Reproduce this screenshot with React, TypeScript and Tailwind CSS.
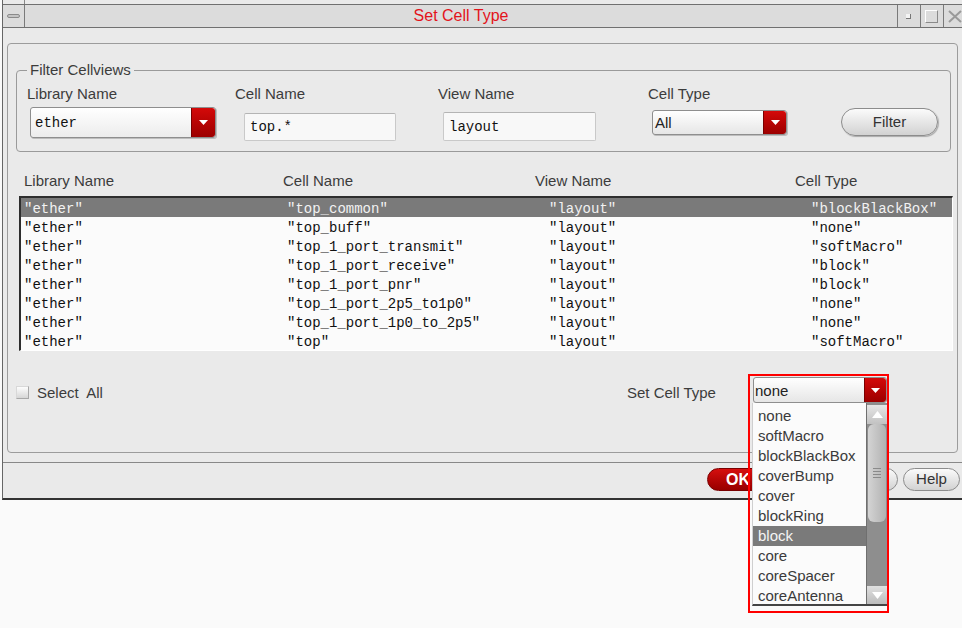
const sans = "font-['Liberation_Sans',Arial,sans-serif]";
const mono = "font-['Liberation_Mono','Courier_New',monospace]";

const rows = [
  ["ether", "top_common", "layout", "blockBlackBox"],
  ["ether", "top_buff", "layout", "none"],
  ["ether", "top_1_port_transmit", "layout", "softMacro"],
  ["ether", "top_1_port_receive", "layout", "block"],
  ["ether", "top_1_port_pnr", "layout", "block"],
  ["ether", "top_1_port_2p5_to1p0", "layout", "none"],
  ["ether", "top_1_port_1p0_to_2p5", "layout", "none"],
  ["ether", "top", "layout", "softMacro"],
];

const cellTypes = [
  "none",
  "softMacro",
  "blockBlackBox",
  "coverBump",
  "cover",
  "blockRing",
  "block",
  "core",
  "coreSpacer",
  "coreAntenna",
];

function Arrow() {
  return (
    <svg width="9" height="5" viewBox="0 0 9 5">
      <path d="M0 0 H9 L4.5 5 Z" fill="#ffffff" />
    </svg>
  );
}

function RedBox({ w }: { w: string }) {
  return (
    <div
      className={`${w} h-full flex items-center justify-center rounded-r-[3px] bg-gradient-to-b from-[#d40a0a] to-[#9c0000] border-l border-[#7a0000]`}
    >
      <Arrow />
    </div>
  );
}

function Pill({ label, className }: { label?: string; className: string }) {
  return (
    <div
      className={`h-[23px] rounded-full border border-[#8c8c8c] bg-gradient-to-b from-[#fbfbfb] to-[#d2d2d2] flex items-center justify-center text-[15px] text-[#333] ${className}`}
    >
      {label}
    </div>
  );
}

export default function App() {
  return (
    <div className={`w-[962px] h-[628px] bg-[#fafafa] overflow-hidden ${sans}`}>
      <div className="ml-[2px] h-[500px] bg-[#eaeaea] border-l border-[#666] border-b-2 border-b-[#333] flex flex-col">
        {/* frame strip */}
        <div className="h-[4px] flex">
          <div className="w-[22px] border-r border-[#888]" />
        </div>

        {/* title bar */}
        <div className="h-[24px] flex bg-[#dcdcdc] border-y border-[#707070]">
          <div className="w-[22px] border-r border-[#7a7a7a] flex items-center justify-center">
            <div className="w-[13px] h-[4px] rounded-[2px] bg-[#c4c4c4] border border-[#8a8a8a]" />
          </div>
          <div className="flex-1 flex items-center justify-center text-[16px] text-[#e3131b]">
            Set Cell Type
          </div>
          <div className="w-[65px] flex">
            <div className="w-[23px] border-l border-[#7a7a7a] flex items-center justify-center">
              <div className="w-[5px] h-[5px] bg-[#f4f4f4] border-r border-b border-[#777]" />
            </div>
            <div className="w-[24px] border-l border-[#7a7a7a] flex items-center justify-center">
              <div className="w-[13px] h-[13px] border border-t-white border-l-white border-r-[#8a8a8a] border-b-[#8a8a8a]" />
            </div>
            <div className="flex-1 border-l border-[#7a7a7a] flex items-center pl-[4px]">
              <svg width="14" height="13" viewBox="0 0 14 13">
                <path d="M1 1 L13 12 M13 1 L1 12" stroke="#9a9a9a" strokeWidth="2" />
              </svg>
            </div>
          </div>
        </div>

        {/* main panel */}
        <div className="mt-[15px] ml-[4px] w-[951px] h-[410px] border border-[#9c9c9c] rounded-[4px] pl-[8px] pt-[17px]">
          <fieldset className="w-[935px] border border-[#9a9a9a] rounded-[4px] px-[10px] pb-[10px]">
            <legend className="px-[3px] text-[15px] leading-[18px] text-[#3c3c3c]">Filter Cellviews</legend>
            <div className="flex items-start pt-[6px] text-[15px] leading-[18px] text-[#3c3c3c]">
              <div className="w-[208px] flex flex-col">
                <span>Library Name</span>
                <div className="mt-[4px] ml-[3px] w-[186px] h-[31px] flex rounded-[3px] border border-[#8e8e8e] bg-gradient-to-b from-[#ffffff] to-[#ececec] shadow-[1px_1px_0_#bdbdbd]">
                  <div className={`flex-1 flex items-center pl-[4px] text-[14px] text-[#111] ${mono}`}>ether</div>
                  <RedBox w="w-[24px]" />
                </div>
              </div>
              <div className="w-[203px] flex flex-col">
                <span>Cell Name</span>
                <div className={`mt-[10px] ml-[9px] w-[152px] h-[28px] flex items-center pl-[5px] rounded-[2px] border border-[#c9c9c9] border-t-[#b4b4b4] bg-[#f8f8f8] text-[14px] text-[#111] ${mono}`}>
                  top.*
                </div>
              </div>
              <div className="w-[210px] flex flex-col">
                <span>View Name</span>
                <div className={`mt-[9px] ml-[5px] w-[153px] h-[29px] flex items-center pl-[5px] rounded-[2px] border border-[#c9c9c9] border-t-[#b4b4b4] bg-[#f8f8f8] text-[14px] text-[#111] ${mono}`}>
                  layout
                </div>
              </div>
              <div className="w-[193px] flex flex-col">
                <span>Cell Type</span>
                <div className="mt-[7px] ml-[4px] w-[135px] h-[25px] flex rounded-[3px] border border-[#8e8e8e] bg-gradient-to-b from-[#ffffff] to-[#e6e6e6] shadow-[1px_1px_0_#bdbdbd]">
                  <div className="flex-1 flex items-center pl-[2px] text-[15px] text-[#222]">All</div>
                  <RedBox w="w-[23px]" />
                </div>
              </div>
              <Pill label="Filter" className="mt-[23px] w-[97px] h-[28px] shadow-[1px_1px_1px_#aaa]" />
            </div>
          </fieldset>

          {/* table header */}
          <div className="mt-[20px] pl-[8px] flex text-[15px] leading-[18px] text-[#3c3c3c]">
            <div className="w-[259px]">Library Name</div>
            <div className="w-[252px]">Cell Name</div>
            <div className="w-[260px]">View Name</div>
            <div>Cell Type</div>
          </div>

          {/* table */}
          <div className={`mt-[6px] ml-[3px] w-[934px] h-[155px] bg-[#fbfbfb] border-t-2 border-l-2 border-[#2e2e2e] border-r border-r-[#ffffff] border-b border-b-[#ffffff] text-[14px] ${mono}`}>
            {rows.map((r, i) => (
              <div
                key={i}
                className={`h-[19px] flex items-center pt-[4px] pl-[3px] ${i === 0 ? "bg-[#7a7a7a] text-[#f2f2f2]" : "text-[#111]"}`}
              >
                <div className="w-[263px]">"{r[0]}"</div>
                <div className="w-[262px]">"{r[1]}"</div>
                <div className="w-[262px]">"{r[2]}"</div>
                <div>"{r[3]}"</div>
              </div>
            ))}
          </div>

          {/* set cell type row */}
          <div className="mt-[26px] h-[26px] flex items-start text-[15px] leading-[18px] text-[#3c3c3c]">
            <div className="w-[611px] flex items-start">
              <div className="mt-[9px] w-[13px] h-[13px] border border-[#a8a8a8] border-t-[#d8d8d8] border-l-[#d8d8d8] bg-gradient-to-b from-[#fdfdfd] to-[#d6d6d6]" />
              <span className="mt-[7px] ml-[8px] whitespace-pre">Select  All</span>
            </div>
            <div className="w-[126px] mt-[7px]">Set Cell Type</div>
            <div className="relative">
              <div className="w-[134px] h-[26px] flex rounded-[3px] border border-[#8e8e8e] bg-gradient-to-b from-[#ffffff] to-[#e6e6e6]">
                <div className="flex-1 flex items-center pt-[2px] pl-[1px] text-[15px] text-[#222]">none</div>
                <RedBox w="w-[22px]" />
              </div>

              {/* open dropdown list */}
              <div className="absolute left-[-1px] top-[26px] z-10 w-[135px] h-[203px] flex bg-[#fbfbfb] border-l border-[#cfcfcf] border-b-2 border-b-[#444]">
                <div className="flex-1 pt-[3px]">
                  {cellTypes.map((t) => (
                    <div
                      key={t}
                      className={`h-[20px] flex items-center pl-[5px] text-[15px] ${t === "block" ? "bg-[#7a7a7a] text-[#f4f4f4]" : "text-[#3a3a3a]"}`}
                    >
                      {t}
                    </div>
                  ))}
                </div>
                <div className="w-[21px] flex flex-col bg-[#8e8e8e] border-l border-[#6f6f6f]">
                  <div className="h-[19px] mt-[2px] flex items-center justify-center bg-gradient-to-b from-[#e6e6e6] to-[#c2c2c2]">
                    <svg width="11" height="7" viewBox="0 0 11 7">
                      <path d="M0 7 L5.5 0 L11 7 Z" fill="#ffffff" />
                    </svg>
                  </div>
                  <div className="h-[98px] mx-[1px] rounded-[6px] bg-gradient-to-r from-[#d4d4d4] to-[#b2b2b2] flex items-center justify-center">
                    <div className="flex flex-col gap-[2px]">
                      <div className="w-[8px] h-[1px] bg-[#8a8a8a]" />
                      <div className="w-[8px] h-[1px] bg-[#8a8a8a]" />
                      <div className="w-[8px] h-[1px] bg-[#8a8a8a]" />
                      <div className="w-[8px] h-[1px] bg-[#8a8a8a]" />
                    </div>
                  </div>
                  <div className="flex-1" />
                  <div className="h-[18px] flex items-center justify-center bg-gradient-to-b from-[#e0e0e0] to-[#bcbcbc]">
                    <svg width="11" height="7" viewBox="0 0 11 7">
                      <path d="M0 0 L11 0 L5.5 7 Z" fill="#ffffff" />
                    </svg>
                  </div>
                </div>
              </div>

              {/* red highlight frame */}
              <div className="absolute left-[-5px] top-[-3px] z-20 w-[141px] h-[239px] border-2 border-[#ff0000] pointer-events-none" />
            </div>
          </div>
        </div>

        {/* button bar */}
        <div className="mt-[9px] h-[36px] border-t border-[#888] flex justify-end gap-[5px] pt-[5px] pr-[2px]">
          <div className="w-[62px] h-[23px] rounded-full bg-gradient-to-b from-[#d60f0f] to-[#980000] border border-[#7a0000] flex items-center justify-center text-[16px] font-bold text-white">
            OK
          </div>
          <Pill className="w-[61px]" />
          <Pill className="w-[58px]" />
          <Pill label="Help" className="w-[57px]" />
        </div>
      </div>
    </div>
  );
}
